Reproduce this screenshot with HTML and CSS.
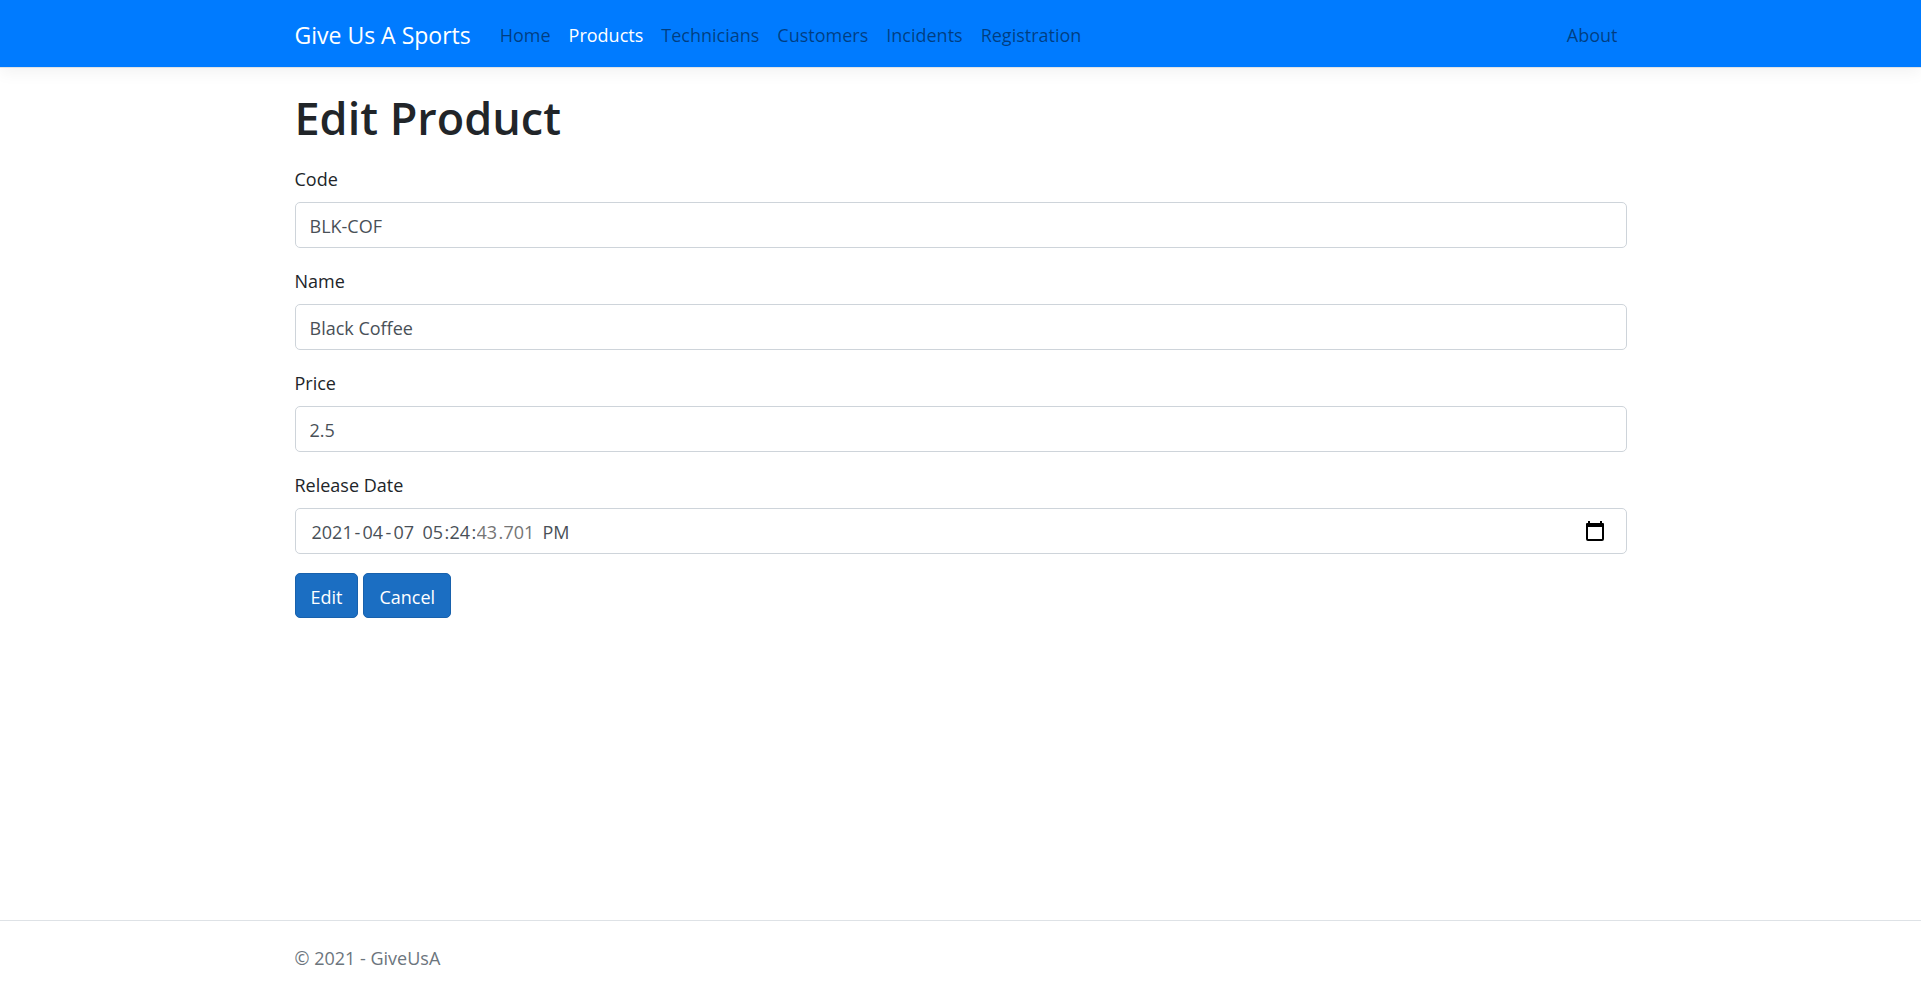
FILE: index.html
```html
<!DOCTYPE html>
<html lang="en">
<head>
  <meta charset="utf-8">
  <meta name="viewport" content="width=device-width, initial-scale=1">
  <title>Edit Product</title>
  <link rel="stylesheet" href="styles.css">
</head>
<body>
  <header class="site-header">
    <nav class="container navbar">
      <a class="brand" href="#">Give Us A Sports</a>
      <ul class="nav-list">
        <li><a class="nav-link" href="#">Home</a></li>
        <li><a class="nav-link active" href="#">Products</a></li>
        <li><a class="nav-link" href="#">Technicians</a></li>
        <li><a class="nav-link" href="#">Customers</a></li>
        <li><a class="nav-link" href="#">Incidents</a></li>
        <li><a class="nav-link" href="#">Registration</a></li>
      </ul>
      <a class="nav-link nav-end" href="#">About</a>
    </nav>
  </header>

  <main class="container main">
    <h1 class="title">Edit Product</h1>
    <form class="form">
      <div class="group">
        <label for="code">Code</label>
        <input class="control" id="code" type="text" value="BLK-COF">
      </div>
      <div class="group">
        <label for="name">Name</label>
        <input class="control" id="name" type="text" value="Black Coffee">
      </div>
      <div class="group">
        <label for="price">Price</label>
        <input class="control" id="price" type="text" value="2.5">
      </div>
      <div class="group">
        <label for="year">Release Date</label>
        <div class="control date">
          <input class="seg seg-4" id="year" type="text" value="2021">
          <span class="dash">-</span>
          <input class="seg" type="text" aria-label="Month" value="04">
          <span class="dash">-</span>
          <input class="seg" type="text" aria-label="Day" value="07">
          <span class="space"></span>
          <input class="seg" type="text" aria-label="Hours" value="05">
          <span class="mark">:</span>
          <input class="seg" type="text" aria-label="Minutes" value="24">
          <span class="mark">:</span>
          <input class="seg muted" type="text" aria-label="Seconds" value="43">
          <span class="mark muted">.</span>
          <input class="seg seg-3 muted" type="text" aria-label="Milliseconds" value="701">
          <span class="space"></span>
          <input class="seg seg-3" type="text" aria-label="AM or PM" value="PM">
          <button class="picker" type="button" aria-label="Show date picker">
            <svg width="20" height="22" viewBox="0 0 20 22" aria-hidden="true">
              <path d="M3 1h2v2h10V1h2v2h1q1 0 1 1v15q0 2-2 2H3q-2 0-2-2V4q0-1 1-1h1zM3 7v12h14V7z" fill="#000" fill-rule="evenodd"/>
            </svg>
          </button>
        </div>
      </div>
      <div class="actions">
        <button class="btn" type="submit">Edit</button>
        <a class="btn" href="#">Cancel</a>
      </div>
    </form>
  </main>

  <footer class="footer">
    <div class="container">© 2021 - GiveUsA</div>
  </footer>
</body>
</html>
```
FILE: styles.css
```css
* {
  box-sizing: border-box;
}

body {
  display: flex;
  flex-direction: column;
  min-height: 100vh;
  margin: 0;
  background: #fff;
  color: #212529;
  font-family: "Open Sans", "Noto Sans", sans-serif;
  font-size: 18px;
  line-height: 28px;
}

a {
  text-decoration: none;
}

.container {
  width: 100%;
  max-width: 1368px;
  margin: 0 auto;
  padding: 0 18px;
}

.site-header {
  padding: 11px 0 9px;
  background: #007bff;
  border-bottom: 1px solid #dee2e6;
  box-shadow: 0 5px 15px rgba(0, 0, 0, 0.05);
}

.navbar {
  display: flex;
  align-items: center;
  min-height: 47px;
}

.brand {
  margin-right: 20px;
  color: #fff;
  font-size: 23px;
}

.nav-list {
  display: flex;
  margin: 0;
  padding: 0;
  list-style: none;
}

.nav-link {
  display: block;
  padding: 9px;
  color: rgba(0, 0, 0, 0.5);
}

.nav-link.active {
  color: #fff;
}

.nav-end {
  margin-left: auto;
}

.main {
  flex: 1;
  padding-top: 21px;
}

.title {
  margin: 0 0 18px;
  font-size: 45px;
  font-weight: 600;
  line-height: 58px;
}

.group {
  margin-bottom: 19px;
}

.group label {
  display: block;
  margin-bottom: 9px;
}

.control {
  display: block;
  width: 100%;
  height: 46px;
  padding: 1px 14px 0;
  border: 1px solid #ced4da;
  border-radius: 5px;
  background: #fff;
  color: #495057;
  font: inherit;
}

.date {
  display: flex;
  align-items: center;
  padding-left: 15px;
}

.seg {
  width: 23px;
  padding: 0 1px;
  border: 0;
  background: none;
  color: inherit;
  font: inherit;
}

.seg-4 {
  width: 43px;
}

.seg-3 {
  width: 33px;
}

.dash {
  width: 8px;
  text-align: center;
}

.space {
  width: 6px;
}

.mark {
  width: 4px;
  text-align: center;
}

.date .muted {
  color: #757575;
}

.picker {
  display: flex;
  margin-left: auto;
  padding: 0 7px 1px;
  border: 0;
  background: none;
}

.actions {
  display: flex;
  gap: 5px;
}

.btn {
  height: 45px;
  padding: 9px 15px 6px;
  border: 1px solid #1861ac;
  border-radius: 5px;
  background: #1b6ec2;
  color: #fff;
  font: inherit;
  line-height: 28px;
}

.footer {
  padding-top: 1px;
  border-top: 1px solid #dee2e6;
  color: #6c757d;
  line-height: 72px;
}
```
